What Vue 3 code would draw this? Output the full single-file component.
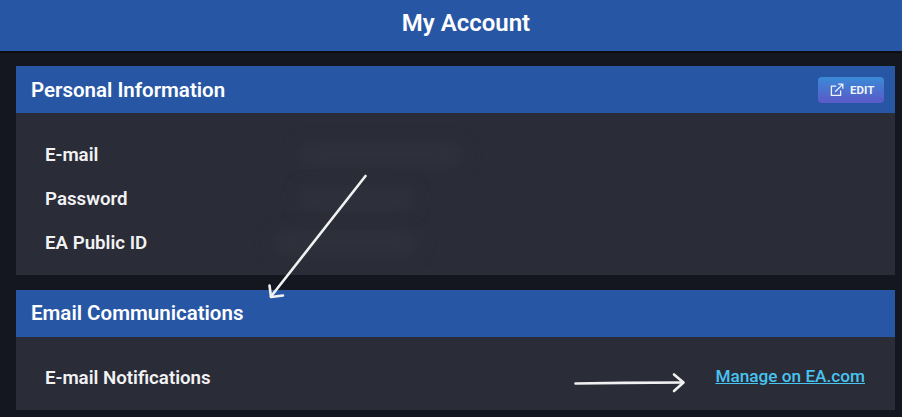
<script setup>
const personal = [
  { label: 'E-mail', blur: 'w-email' },
  { label: 'Password', blur: 'w-pass' },
  { label: 'EA Public ID', blur: 'w-id' },
]
</script>

<template>
  <div class="page">
    <header class="topbar">
      <h1>My Account</h1>
    </header>

    <main class="content">
      <section class="card">
        <div class="card-head">
          <h2>Personal Information</h2>
          <button type="button" class="edit">
            <svg width="14" height="14" viewBox="0 0 14 14" fill="none" stroke="currentColor" stroke-width="1.3">
              <path d="M10.6 7.6v4.7H1.4V3.2h4.8" />
              <path d="M5.2 8.8 12.6 1.4M8.2 1.2h4.6v4.6" />
            </svg>
            <span>EDIT</span>
          </button>
        </div>
        <div class="rows">
          <div v-for="row in personal" :key="row.label" class="row">
            <span class="label">{{ row.label }}</span>
            <span class="hidden-value" :class="row.blur"></span>
          </div>
        </div>
      </section>

      <section class="card">
        <div class="card-head second">
          <h2>Email Communications</h2>
        </div>
        <div class="notify">
          <span class="label">E-mail Notifications</span>
          <a href="#" class="manage">Manage on EA.com</a>
        </div>
      </section>
    </main>

    <svg class="arrows" width="902" height="417" viewBox="0 0 902 417" fill="none" stroke="#f1f1f1" stroke-linecap="round" stroke-linejoin="round">
      <path d="M365.5 176 271 296.5" stroke-width="2.6" />
      <path d="M269.5 285.5 271 297 283 295.5" stroke-width="2.6" />
      <path d="M575.5 383.5C610 383 650 382.5 683 382.5" stroke-width="2.6" />
      <path d="M674 374.5 683.5 382.5 674 391" stroke-width="2.6" />
    </svg>
  </div>
</template>

<style scoped>
.page {
  position: relative;
  width: 902px;
  height: 417px;
  overflow: hidden;
  background: #14171f;
  color: #fff;
  font-family: Roboto, "Liberation Sans", sans-serif;
}
.topbar {
  display: flex;
  align-items: center;
  justify-content: center;
  box-sizing: border-box;
  height: 52px;
  background: #2757a4;
  border-bottom: 1px solid #0c0d11;
  box-shadow: 0 1px 1px #0c0d11;
  padding: 0 0 5px 30px;
}
.topbar h1 {
  margin: 0;
  font-size: 24px;
  font-weight: 600;
  line-height: 28px;
}
.content {
  display: flex;
  flex-direction: column;
  gap: 15px;
  width: 879px;
  margin: 14px 0 0 16px;
}
.card {
  background: #2a2c37;
}
.card-head {
  display: flex;
  align-items: center;
  justify-content: space-between;
  box-sizing: border-box;
  height: 47px;
  padding: 0 11px 0 15px;
  background: #2757a4;
}
.card-head.second {
  padding-bottom: 2px;
}
.card-head h2 {
  margin: 0;
  font-size: 20.5px;
  font-weight: 600;
  line-height: 24px;
}
.edit {
  display: flex;
  align-items: center;
  gap: 6px;
  box-sizing: border-box;
  width: 66px;
  height: 26px;
  padding: 0 0 0 12px;
  border: 0;
  border-radius: 4px;
  background: linear-gradient(180deg, #3a8ad6, #5b59c8);
  color: #eef3fb;
  font-family: inherit;
  font-size: 11.5px;
  font-weight: 700;
}
.rows {
  display: flex;
  flex-direction: column;
  gap: 14px;
  height: 162px;
  box-sizing: border-box;
  padding: 27px 29px 0;
}
.row {
  display: flex;
  align-items: center;
  height: 30px;
}
.label {
  width: 240px;
  font-size: 18.7px;
  font-weight: 600;
  color: #f2f2f4;
}
.hidden-value {
  height: 16px;
  margin-left: 10px;
  background: #31343e;
  filter: blur(9px);
}
.w-email { width: 160px; margin-left: 16px; }
.w-pass { width: 110px; margin-left: 16px; }
.w-id { width: 140px; margin-left: -10px; }
.notify {
  display: flex;
  align-items: center;
  justify-content: space-between;
  box-sizing: border-box;
  height: 73px;
  padding: 0 30px 0 29px;
}
.notify .label {
  width: auto;
  margin-top: 8px;
}
.manage {
  margin-top: 5px;
  color: #48c4f2;
  font-size: 17.2px;
  font-weight: 500;
  text-decoration: underline;
}
.arrows {
  position: absolute;
  top: 0;
  left: 0;
  pointer-events: none;
}
</style>
